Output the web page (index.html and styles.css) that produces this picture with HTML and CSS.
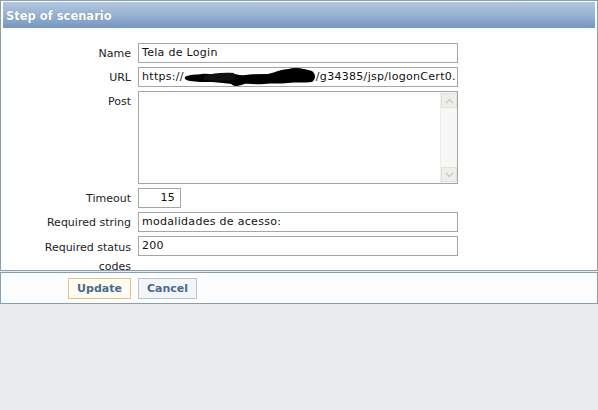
FILE: index.html
```html
<!DOCTYPE html>
<html>
<head>
<meta charset="utf-8">
<link rel="stylesheet" href="styles.css">
</head>
<body>
<div class="window">
  <div class="header">Step of scenario</div>
  <div class="form">
    <div class="label">Name</div>
    <div class="field">Tela de Login</div>
    <div class="label">URL</div>
    <div class="field">https://<span class="blot"><svg width="132" height="18" viewBox="0 0 132 18"><path d="M1 9 C6 6 12 7 18 6 C26 5 32 8 40 6 C48 4 54 8 62 7 C70 5 76 8 84 6 C92 4 98 1 106 1 C114 0 122 1 128 3 C132 6 132 11 128 14 C120 15 112 14 104 15 C96 16 88 15 80 16 C72 17 66 15 60 16 C56 18 50 18 48 16 C42 15 36 15 28 14 C20 14 12 14 6 13 C2 12 0 11 1 9 Z" fill="#000"/><path d="M20 8 C28 5 40 4 50 5 L52 12 C40 13 28 13 20 12 Z" fill="#111"/><ellipse cx="52" cy="15" rx="5" ry="3" fill="#000"/><ellipse cx="112" cy="6" rx="14" ry="6" fill="#000"/><ellipse cx="80" cy="10" rx="16" ry="4" fill="#000"/></svg></span>/g34385/jsp/logonCert0.</div>
    <div class="label">Post</div>
    <div class="textarea">
      <div class="scroll">
        <div class="arrow up"><svg width="9" height="6" viewBox="0 0 9 6"><path d="M1 5 L4.5 1.5 L8 5" fill="none" stroke="#c9cbbf" stroke-width="1.3"/></svg></div>
        <div class="arrow down"><svg width="9" height="6" viewBox="0 0 9 6"><path d="M1 1 L4.5 4.5 L8 1" fill="none" stroke="#c9cbbf" stroke-width="1.3"/></svg></div>
      </div>
    </div>
    <div class="label">Timeout</div>
    <div class="field short">15</div>
    <div class="label">Required string</div>
    <div class="field">modalidades de acesso:</div>
    <div class="label wrap">Required status codes</div>
    <div class="field">200</div>
  </div>
</div>
<div class="footer">
  <div class="btn-cell"><span class="btn update">Update</span></div>
  <div><span class="btn cancel">Cancel</span></div>
</div>
</body>
</html>
```
FILE: styles.css
```css
html, body {
  margin: 0;
  padding: 0;
}
body {
  width: 598px;
  height: 410px;
  background: #e9ecef;
  font-family: "DejaVu Sans", Verdana, sans-serif;
  font-size: 11px;
  color: #000;
}
.window {
  border: 1px solid #8a9eb2;
  background: #ffffff;
  padding: 1px 2px 0 1px;
  box-sizing: border-box;
  width: 598px;
  height: 271px;
}
.header {
  box-sizing: border-box;
  height: 26px;
  margin-left: 1px;
  background: linear-gradient(#b2c6de, #97b2d3 50%, #7696c1);
  color: #fff;
  font-weight: bold;
  font-size: 11.5px;
  line-height: 26px;
  padding: 1px 0 0 3px;
  text-shadow: 0 0 1px rgba(60, 80, 110, 0.5);
}
.form {
  display: grid;
  grid-template-columns: 92px 320px;
  grid-auto-rows: auto;
  column-gap: 7px;
  row-gap: 4px;
  padding: 15px 0 0 37px;
}
.label {
  box-sizing: border-box;
  height: 20px;
  text-align: right;
  line-height: 20px;
  padding-top: 1px;
  color: #222;
}
.label.wrap {
  line-height: 19px;
  padding-top: 2px;
}
.field {
  height: 20px;
  box-sizing: border-box;
  border: 1px solid #a3a6a6;
  padding: 0 3px;
  line-height: 18px;
  letter-spacing: 0.3px;
  white-space: nowrap;
  overflow: hidden;
  color: #111;
  background: #fff;
}
.field.short {
  width: 43px;
  text-align: right;
  padding-right: 5px;
}
.blot {
  display: inline-block;
  width: 132px;
  height: 18px;
  vertical-align: top;
}
.blot svg {
  display: block;
}
.textarea {
  height: 93px;
  box-sizing: border-box;
  border: 1px solid #a3a6a6;
  display: flex;
  justify-content: flex-end;
  background: #fff;
}
.scroll {
  width: 16px;
  background: #f7f7f5;
  border-left: 1px solid #eeeeea;
  display: flex;
  flex-direction: column;
  justify-content: space-between;
  padding: 1px 0;
}
.arrow {
  height: 15px;
  background: #efefe9;
  border: 1px solid #e2e2da;
  box-sizing: border-box;
  display: flex;
  align-items: center;
  justify-content: center;
}
.footer {
  margin-top: 1px;
  width: 598px;
  height: 32px;
  box-sizing: border-box;
  border: 1px solid #8a9eb2;
  background: #fbfdff;
  display: grid;
  grid-template-columns: 130px auto;
  column-gap: 7px;
  align-items: start;
  padding-top: 5px;
}
.btn-cell {
  text-align: right;
}
.btn {
  display: inline-block;
  height: 21px;
  box-sizing: border-box;
  line-height: 19px;
  font-weight: bold;
  color: #4b6a8c;
}
.btn.update {
  border: 1px solid #e6bf86;
  background: #fffcf3;
  width: 63px;
  text-align: center;
}
.btn.cancel {
  border: 1px solid #b8c4ce;
  background: #f3f6f9;
  width: 59px;
  text-align: center;
}
```
